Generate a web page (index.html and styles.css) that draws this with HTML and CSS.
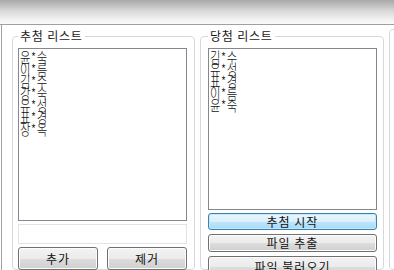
FILE: index.html
```html
<html>
<head>
<meta charset="utf-8">
<title>추첨</title>
<link rel="stylesheet" href="styles.css">
</head>
<body>
    <div class="titlebar"></div>
    <div class="frame">
        <fieldset class="group">
            <legend>추첨 리스트</legend>
            <div class="listbox pool">
                <div class="item"><span>윤*숙</span></div>
                <div class="item"><span>이*름</span></div>
                <div class="item"><span>김*수</span></div>
                <div class="item"><span>강*숙</span></div>
                <div class="item"><span>유*성</span></div>
                <div class="item"><span>표*경</span></div>
                <div class="item"><span>장*옥</span></div>
            </div>
            <input class="entry" type="text">
            <div class="btn-row">
                <button class="btn">추가</button>
                <button class="btn">제거</button>
            </div>
        </fieldset>
        <fieldset class="group winners">
            <legend>당첨 리스트</legend>
            <div class="listbox picked">
                <div class="item"><span>김*수</span></div>
                <div class="item"><span>유*성</span></div>
                <div class="item"><span>표*경</span></div>
                <div class="item"><span>이*름</span></div>
                <div class="item"><span>윤*숙</span></div>
            </div>
            <button class="btn wide focused">추첨 시작</button>
            <button class="btn wide">파일 추출</button>
            <button class="btn wide tall">파일 불러오기</button>
        </fieldset>
        <fieldset class="group">
            <legend></legend>
        </fieldset>
    </div>
</body>
</html>
```
FILE: styles.css
```css
body {
  margin: 0;
  width: 394px;
  height: 270px;
  overflow: hidden;
  background-color: #ffffff;
  font-family: "Noto Sans CJK KR", "Noto Sans", sans-serif;
  color: #111;
}

.titlebar {
  height: 24px;
  border-bottom: 1px solid #a0a0a0;
  background: linear-gradient(#a8a8a8, #d8d8d8 45%, #f4f4f4 85%, #f8f8f8);
}

.frame {
  display: flex;
  gap: 5px;
  margin-left: 1px;
  border-left: 1px solid #a0a0a0;
  padding: 4px 0 0 10px;
  height: 241px;
  overflow: hidden;
}

.group {
  flex: none;
  box-sizing: border-box;
  width: 183px;
  min-width: 0;
  margin: 0;
  padding: 5px 7px 0 5px;
  border: 1px solid #d5d9dc;
  border-radius: 4px;
}

.group.winners {
  width: 184px;
  padding-left: 7px;
}

legend {
  padding: 0 2px;
  font-size: 12px;
  line-height: 14px;
  letter-spacing: 0.8px;
  color: #1a1a1a;
}

.listbox {
  box-sizing: border-box;
  width: 169px;
  border: 1px solid #828790;
  background-color: #fff;
  padding: 2px 1px;
  overflow: hidden;
}

.listbox.pool {
  height: 173px;
}

.listbox.picked {
  height: 162px;
}

.item {
  font-size: 12px;
  font-weight: 300;
  line-height: 12px;
  height: 12px;
  letter-spacing: 0.6px;
}

.item span {
  display: inline-block;
  transform: scale(0.95, 1.22);
  transform-origin: left center;
}

.entry {
  display: block;
  box-sizing: border-box;
  width: 169px;
  height: 20px;
  margin: 3px 0 0 0;
  border: 1px solid #e2e3e5;
  outline: none;
}

.btn-row {
  display: flex;
  gap: 9px;
  margin-top: 3px;
}

.btn {
  box-sizing: border-box;
  width: 80px;
  height: 23px;
  padding: 0;
  border: 1px solid #707070;
  border-radius: 3px;
  background: linear-gradient(#f3f3f3, #ebebeb 50%, #dddddd 51%, #cfcfcf);
  box-shadow: inset 0 0 0 1px #fcfcfc;
  font-family: "Noto Sans CJK KR", "Noto Sans", sans-serif;
  font-size: 12px;
  line-height: 14px;
  letter-spacing: 1px;
  color: #111;
}

.btn.wide {
  display: block;
  width: 169px;
  height: 18px;
  margin-top: 4px;
}

.btn.focused {
  height: 17px;
  margin-top: 3px;
  border-color: #3c7fb1;
  background: linear-gradient(#eaf6fd, #d9f0fc 50%, #bee6fd 51%, #a7d9f5);
  box-shadow: inset 0 0 0 1px #c4e8fb;
}

.btn.tall {
  height: 22px;
}
```
